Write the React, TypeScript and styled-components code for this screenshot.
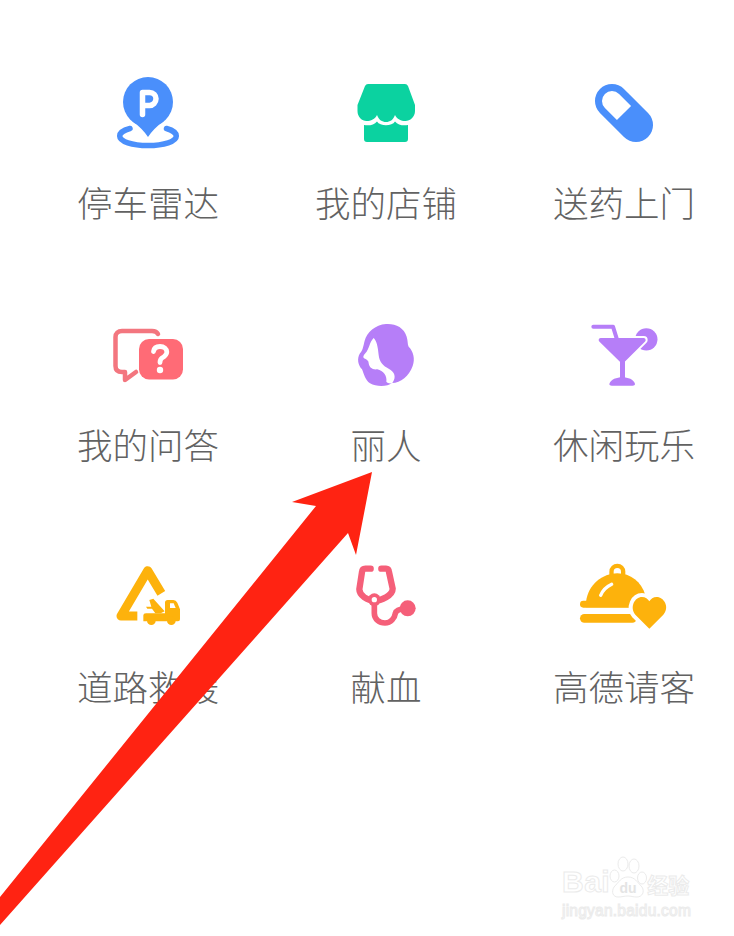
import React from "react";
import styled, { createGlobalStyle } from "styled-components";

const Global = createGlobalStyle`
  html, body { margin: 0; padding: 0; background: #fff; }
  #root { width: 734px; height: 936px; }
`;

const Page = styled.div`
  position: relative;
  width: 734px;
  height: 936px;
  overflow: hidden;
  background: #fff;
`;

const Grid = styled.div`
  display: grid;
  grid-template-columns: repeat(3, 238px);
  grid-auto-rows: 242px;
  padding: 72px 0 0 29px;
`;

const Cell = styled.div`
  display: flex;
  flex-direction: column;
  align-items: center;
`;

const IconBox = styled.svg`
  display: block;
  width: 80px;
  height: 80px;
  flex: none;
  overflow: visible;
`;

const Label = styled.div`
  margin-top: 26px;
  height: 48px;
  line-height: 48px;
  font-family: "Noto Sans CJK SC", "Noto Sans", sans-serif;
  font-size: 35.5px;
  font-weight: 300;
  color: #626262;
  white-space: nowrap;
`;

const ArrowLayer = styled.svg`
  position: absolute;
  left: 0;
  top: 0;
  width: 734px;
  height: 936px;
  pointer-events: none;
`;

const Watermark = styled.div`
  position: absolute;
  left: 562px;
  top: 856px;
  width: 134px;
  height: 64px;
  font-family: "Liberation Sans", Arial, sans-serif;
  color: #fff;
  -webkit-text-stroke: 1px #ebebeb;
`;

const MarkTop = styled.div`
  display: flex;
  align-items: flex-end;
  height: 42px;
`;

const Bai = styled.span`
  font-size: 30px;
  line-height: 30px;
  font-weight: 700;
  margin-bottom: 1px;
  letter-spacing: 0.5px;
`;

const Paw = styled.svg`
  width: 38px;
  height: 42px;
  margin-left: -1px;
  flex: none;
`;

const PawText = styled.text`
  font-family: "Liberation Sans", Arial, sans-serif;
  font-size: 14px;
  font-weight: 700;
  -webkit-text-stroke: 0;
`;

const Cn = styled.span`
  font-family: "Noto Sans CJK SC", sans-serif;
  font-size: 21px;
  line-height: 28px;
  font-weight: 700;
  white-space: nowrap;
`;

const Domain = styled.div`
  margin-top: 5px;
  font-size: 15.6px;
  line-height: 16px;
  letter-spacing: 0.2px;
  white-space: nowrap;
`;

const BLUE = "#4a8ffb";
const GREEN = "#0bd2a0";
const RED = "#ff6b76";
const PURPLE = "#b67ef8";
const AMBER = "#fdb20c";
const ROSE = "#f55f79";

const ParkingIcon = () => (
  <IconBox viewBox="0 0 80 80">
    <circle cx="40" cy="30" r="25" fill={BLUE} />
    <path d="M24 49Q34 56 40 65Q46 56 56 49Z" fill={BLUE} />
    <path d="M34.5 42.5V20.5H41.5C45.5 20.5 48 23.5 48 26.8C48 30.5 45 33.5 41.5 33.5H34.5" fill="none" stroke="#fff" strokeWidth="5.5" strokeLinecap="round" strokeLinejoin="round" />
    <path d="M22 56.5C16 58 11.7 61 11.7 64C11.7 69.5 24 73.5 40 73.5C56 73.5 68.3 69.5 68.3 64C68.3 61 64 58 58.5 56.5" fill="none" stroke={BLUE} strokeWidth="5.5" strokeLinecap="round" />
  </IconBox>
);

const ShopIcon = () => (
  <IconBox viewBox="0 0 80 80">
    <path d="M22 12H59Q61 12 62 14L69 33V39C69 45 64 49 59.5 49C55 49 51 47 49 43C47 48 44 50 40 50C36 50 33 48 31 43C29 47 25 49 20.5 49C16 49 11.5 45 11.5 39V33L19 14Q20 12 22 12Z" fill={GREEN} />
    <path d="M18 53C23 54 28 53 31 49.5C34 54.5 46 54.5 49 49.5C52 53 57 54 62 53V67Q62 70 59 70H21Q18 70 18 67Z" fill={GREEN} />
  </IconBox>
);

const PillIcon = () => (
  <IconBox viewBox="0 0 80 80">
    <g transform="rotate(45 40 41)">
      <rect x="6" y="24" width="68" height="34" rx="17" fill={BLUE} />
      <path d="M40 31H23A10 10 0 0 0 23 51H40Z" fill="#fff" />
    </g>
  </IconBox>
);

const QaIcon = () => (
  <IconBox viewBox="0 0 80 80">
    <path d="M50 20C49 18 47 17 44 17H14C10 17 7.5 19.5 7.5 23V52C7.5 56 10 58 14 58H17V66L28 58" fill="none" stroke="#f3767f" strokeWidth="4.5" strokeLinecap="round" strokeLinejoin="round" />
    <rect x="31" y="25" width="44" height="40.5" rx="10" fill={RED} />
    <path d="M45.5 37.5C46 33.8 49 32.5 52 32.5C56 32.5 58.8 35 58.8 38C58.8 41 56 42.8 54 44C52.5 45 52 46 52 48.5" fill="none" stroke="#fff" strokeWidth="4.8" strokeLinecap="round" />
    <circle cx="52" cy="56" r="3.2" fill="#fff" />
  </IconBox>
);

const LadyIcon = () => (
  <IconBox viewBox="768 12 240 240">
    <path d="M888 42C915 40 942 52 950 80C954 92 952 102 956 110C970 124 976 146 968 168C958 198 930 220 905 219C895 230 860 232 840 220C825 210 822 192 816 178C804 166 800 146 810 130C820 118 820 106 824 92C830 68 856 44 888 42Z" fill={PURPLE} />
    <path d="M851 84C860 92 864 112 866 135C868 156 880 168 896 176C914 186 920 200 907 219C899 222 893 219 889 215C892 198 880 182 862 178C846 180 838 172 836 160C836 152 832 150 822 145C818 142 820 136 826 130C838 118 838 96 851 84Z" fill="#fff" />
  </IconBox>
);

const CocktailIcon = () => (
  <IconBox viewBox="42 12 240 240">
    <circle cx="229" cy="88" r="33.5" fill={PURPLE} />
    <path d="M92 90H221L157 154Z" fill="#fff" stroke="#fff" strokeWidth="24" strokeLinejoin="round" />
    <path d="M70 50H129L142 92" fill="none" stroke={PURPLE} strokeWidth="12" strokeLinecap="round" strokeLinejoin="round" />
    <path d="M92 90H221L157 154Z" fill={PURPLE} stroke={PURPLE} strokeWidth="12" strokeLinejoin="round" />
    <rect x="150" y="150" width="15" height="60" fill={PURPLE} />
    <path d="M118 222C122 208 140 202 157 202C174 202 191 208 195 222C195 226 192 227 188 227H125C121 227 118 226 118 222Z" fill={PURPLE} />
  </IconBox>
);

const RescueIcon = () => (
  <IconBox viewBox="54 18 240 240">
    <path d="M142 198H93L173 62L214 130" fill="none" stroke={AMBER} strokeWidth="27" strokeLinejoin="round" />
    <path d="M225 158Q225 150 233 150H250Q258 150 262 158L270 178V208Q270 214 264 214H160V196Q160 190 168 190H225Z" fill={AMBER} />
    <path d="M168 170H184L178 150L190 146L224 184L212 190H196L186 176H172Z" fill={AMBER} />
    <path d="M240 160H251L257 174H240Z" fill="#fff" />
    <circle cx="184" cy="212" r="13" fill={AMBER} />
    <circle cx="244" cy="212" r="13" fill={AMBER} />
  </IconBox>
);

const StethIcon = () => (
  <IconBox viewBox="768 18 240 240">
    <path d="M842 56H826Q817 56 816 66L808 118C808 136 832 152 853 152C874 152 908 136 908 116L897 66Q896 56 888 56H874" fill="none" stroke={ROSE} strokeWidth="19" strokeLinecap="round" strokeLinejoin="round" />
    <path d="M853 152V190C853 208 868 219 885 219C903 219 914 204 916 190C918 180 930 176 950 175" fill="none" stroke={ROSE} strokeWidth="17" strokeLinecap="round" />
    <circle cx="853" cy="149" r="19" fill={ROSE} />
    <circle cx="853" cy="149" r="8" fill="#fff" />
    <circle cx="953" cy="175" r="24" fill={ROSE} />
  </IconBox>
);

const DomeIcon = () => (
  <IconBox viewBox="72 18 240 240">
    <path d="M172 41A24 24 0 0 1 196 65V76H148V65A24 24 0 0 1 172 41Z" fill={AMBER} />
    <path d="M172 54A11 11 0 0 1 183 65V72H161V65A11 11 0 0 1 172 54Z" fill="#fff" />
    <path d="M78 156C84 104 128 70 172 70C212 70 244 96 256 135L240 172H78Z" fill={AMBER} />
    <rect x="60" y="152" width="160" height="21" rx="10" fill={AMBER} />
    <path d="M122 136C128 122 140 110 155 103" fill="none" stroke="#fff" strokeWidth="10" strokeLinecap="round" />
    <rect x="60" y="192" width="170" height="26" rx="13" fill={AMBER} />
    <path d="M268 236L226 194C208 172 224 141 246 141C256 141 264 147 268 154C272 147 280 141 290 141C312 141 330 172 310 194Z" fill={AMBER} stroke="#fff" strokeWidth="24" strokeLinejoin="round" />
    <path d="M268 236L226 194C208 172 224 141 246 141C256 141 264 147 268 154C272 147 280 141 290 141C312 141 330 172 310 194Z" fill={AMBER} />
  </IconBox>
);

type Item = { label: string; Icon: React.FC };

const items: Item[] = [
  { label: "停车雷达", Icon: ParkingIcon },
  { label: "我的店铺", Icon: ShopIcon },
  { label: "送药上门", Icon: PillIcon },
  { label: "我的问答", Icon: QaIcon },
  { label: "丽人", Icon: LadyIcon },
  { label: "休闲玩乐", Icon: CocktailIcon },
  { label: "道路救援", Icon: RescueIcon },
  { label: "献血", Icon: StethIcon },
  { label: "高德请客", Icon: DomeIcon },
];

export default function App() {
  return (
    <Page>
      <Global />
      <Grid>
        {items.map(({ label, Icon }) => (
          <Cell key={label}>
            <Icon />
            <Label>{label}</Label>
          </Cell>
        ))}
      </Grid>
      <ArrowLayer viewBox="0 0 734 936">
        <polygon points="0,897 316,506 292,502 372,472 356,555 348,533 0,925" fill="#ff2312" />
      </ArrowLayer>
      <Watermark>
        <MarkTop>
          <Bai>Bai</Bai>
          <Paw viewBox="0 0 38 42" fill="#fff" stroke="#ebebeb" strokeWidth="1">
            <ellipse cx="5.5" cy="20" rx="4.5" ry="6" />
            <ellipse cx="14" cy="8" rx="5" ry="7" />
            <ellipse cx="25" cy="10" rx="5" ry="7" />
            <ellipse cx="33" cy="22" rx="4.5" ry="6" />
            <path d="M19 21C26 21 28 26 33 31C36 36 33 41 28 41C24 41 22 40 19 40C15 40 13 41 9 41C4 41 2 36 5 31C10 26 12 21 19 21Z" />
            <PawText x="19" y="37" textAnchor="middle" fill="#e4e4e4" stroke="none">du</PawText>
          </Paw>
          <Cn>经验</Cn>
        </MarkTop>
        <Domain>jingyan.baidu.com</Domain>
      </Watermark>
    </Page>
  );
}
